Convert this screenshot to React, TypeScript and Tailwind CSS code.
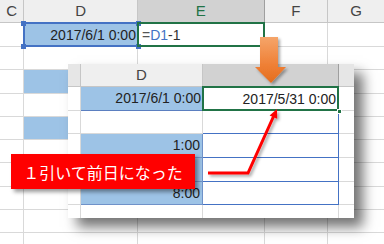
const grid = 'border-r border-b border-[#d9d9d9]';

function Sheet() {
  const rows = [23, 24, 23, 23, 23, 24, 23, 23, 24];
  return (
    <div className="flex flex-col">
      <div className="flex h-[23px] bg-[#efefef] text-[15px] text-[#444]">
        <div className="w-[26px] flex items-center justify-center border-r border-b border-[#c6c6c6]">C</div>
        <div className="w-[122px] flex items-center justify-center border-r border-b border-[#c6c6c6]">D</div>
        <div className="w-[136px] flex items-center justify-center bg-[#d2d2d2] border-r border-b border-[#9f9f9f] text-[#217346]">E</div>
        <div className="w-[68px] flex items-center justify-center border-r border-b border-[#c6c6c6]">F</div>
        <div className="w-[60px] flex items-center justify-center border-b border-[#c6c6c6]">G</div>
      </div>
      {/* row 1 */}
      <div className="flex h-[24px] text-[14px]">
        <div className={`w-[26px] ${grid}`} />
        <div className="w-[122px] relative bg-[#9dc3e6] flex items-center justify-end pr-[2px] text-[#222]">
          2017/6/1 0:00
          <div className="absolute -left-[1px] -top-[1px] -right-[1px] bottom-0 border-2 border-[#4472c4]" />
          <div className="absolute -left-[3px] -top-[2px] w-[5px] h-[5px] bg-[#4472c4]" />
          <div className="absolute -right-[3px] -top-[2px] w-[5px] h-[5px] bg-[#4472c4]" />
          <div className="absolute -left-[3px] -bottom-[2px] w-[5px] h-[5px] bg-[#4472c4]" />
          <div className="absolute -right-[3px] -bottom-[2px] w-[5px] h-[5px] bg-[#4472c4]" />
        </div>
        <div className="w-[136px] relative flex items-center pl-[4px]">
          <span className="text-[#555]">=</span>
          <span className="text-[#4472c4]">D1</span>
          <span className="text-[#333]">-1</span>
          <div className="absolute -left-[1px] -top-[1px] right-0 bottom-0 border-2 border-[#217346]" />
          <div className="absolute -right-[3px] -bottom-[3px] w-[5px] h-[5px] bg-[#217346] border border-white" />
        </div>
        <div className={`w-[68px] ${grid}`} />
        <div className="w-[60px] border-b border-[#d9d9d9]" />
      </div>
      {rows.map((h, i) => (
        <div key={i} className="flex" style={{ height: h }}>
          <div className={`w-[26px] ${grid}`} />
          <div className={`w-[122px] ${grid} ${i === 1 || i === 3 ? 'bg-[#9dc3e6] border-[#6f92c9]' : ''}`} />
          <div className={`w-[136px] ${grid}`} />
          <div className={`w-[68px] ${grid}`} />
          <div className="w-[60px] border-b border-[#d9d9d9]" />
        </div>
      ))}
    </div>
  );
}

function Popup() {
  const pg = 'border-r border-b border-[#d9d9d9]';
  return (
    <div className="absolute left-[68px] top-[64px] w-[286px] h-[154px] bg-white overflow-hidden shadow-[9px_9px_12px_rgba(0,0,0,0.55)] text-[14px] text-[#222]">
      <div className="flex h-[23px] text-[15px] text-[#444]">
        <div className="w-[13px] bg-[#e6e6e6] border-r border-b border-[#c6c6c6]" />
        <div className="w-[122px] bg-[#efefef] flex items-center justify-center border-r border-b border-[#c6c6c6]">D</div>
        <div className="w-[136px] bg-[#d2d2d2] border-r border-b border-[#9f9f9f]" />
        <div className="flex-1 bg-[#e6e6e6] border-b border-[#c6c6c6]" />
      </div>
      <div className="flex h-[24px]">
        <div className={`w-[13px] ${pg}`} />
        <div className="w-[122px] bg-[#9dc3e6] border-b border-[#5b7fc0] flex items-center justify-end pr-[2px]">2017/6/1 0:00</div>
        <div className="w-[136px] relative flex items-center justify-end pr-[3px]">
          2017/5/31 0:00
          <div className="absolute -left-[1px] -top-[1px] right-0 bottom-0 border-2 border-[#217346]" />
          <div className="absolute -right-[3px] -bottom-[3px] w-[5px] h-[5px] bg-[#217346] border border-white" />
        </div>
        <div className={`flex-1 border-b border-[#d9d9d9]`} />
      </div>
      <div className="flex h-[23px]">
        <div className={`w-[13px] ${pg}`} />
        <div className={`w-[122px] ${pg}`} />
        <div className="w-[136px] border-r border-b border-[#4472c4]" />
        <div className="flex-1 border-b border-[#d9d9d9]" />
      </div>
      {[
        ['1:00', 24],
        ['', 24],
        ['8:00', 23],
      ].map(([t, h], i) => (
        <div key={i} className="flex" style={{ height: h as number }}>
          <div className={`w-[13px] ${pg}`} />
          <div className="w-[122px] bg-[#9dc3e6] border-r border-b border-[#6f92c9] flex items-center justify-end pr-[2px]">{t}</div>
          <div className="w-[136px] border-r border-b border-[#4472c4]" />
          <div className="flex-1 border-b border-[#d9d9d9]" />
        </div>
      ))}
      <div className="flex h-[14px]">
        <div className={`w-[13px] ${pg}`} />
        <div className={`w-[122px] ${pg}`} />
        <div className={`w-[136px] ${pg}`} />
        <div className="flex-1" />
      </div>
    </div>
  );
}

export default function App() {
  return (
    <div
      className="relative w-[384px] h-[244px] overflow-hidden bg-white"
      style={{ fontFamily: '"Liberation Sans", Arial, "Noto Sans CJK JP", sans-serif' }}
    >
      <Sheet />
      <Popup />
      <svg className="absolute inset-0 pointer-events-none" width="384" height="244" viewBox="0 0 384 244">
        <defs>
          <linearGradient id="og" x1="0" y1="0" x2="0" y2="1">
            <stop offset="0" stopColor="#f5a56a" />
            <stop offset="0.6" stopColor="#ef8036" />
            <stop offset="1" stopColor="#e46d1d" />
          </linearGradient>
          <filter id="sh" x="-20%" y="-20%" width="140%" height="140%">
            <feDropShadow dx="2" dy="2" stdDeviation="1.5" floodColor="#000" floodOpacity="0.35" />
          </filter>
        </defs>
        <path d="M260 37 H278 V67 H286 L271 83 L255 67 H260 Z" fill="url(#og)" filter="url(#sh)" />
        <g filter="url(#sh)">
          <polyline points="208,173 248,173 273.5,116.5" fill="none" stroke="#ff0000" strokeWidth="3" />
          <polygon points="277,109 277.2,118.8 269.6,115.4" fill="#ff0000" />
        </g>
      </svg>
      <div
        className="absolute left-[11px] top-[154px] w-[184px] h-[35px] bg-[#ff0000] flex items-center justify-center text-white text-[16px] shadow-[3px_3px_4px_rgba(0,0,0,0.4)]"
        style={{ fontFamily: '"Noto Sans CJK JP", sans-serif' }}
      >
        １引いて前日になった
      </div>
    </div>
  );
}
